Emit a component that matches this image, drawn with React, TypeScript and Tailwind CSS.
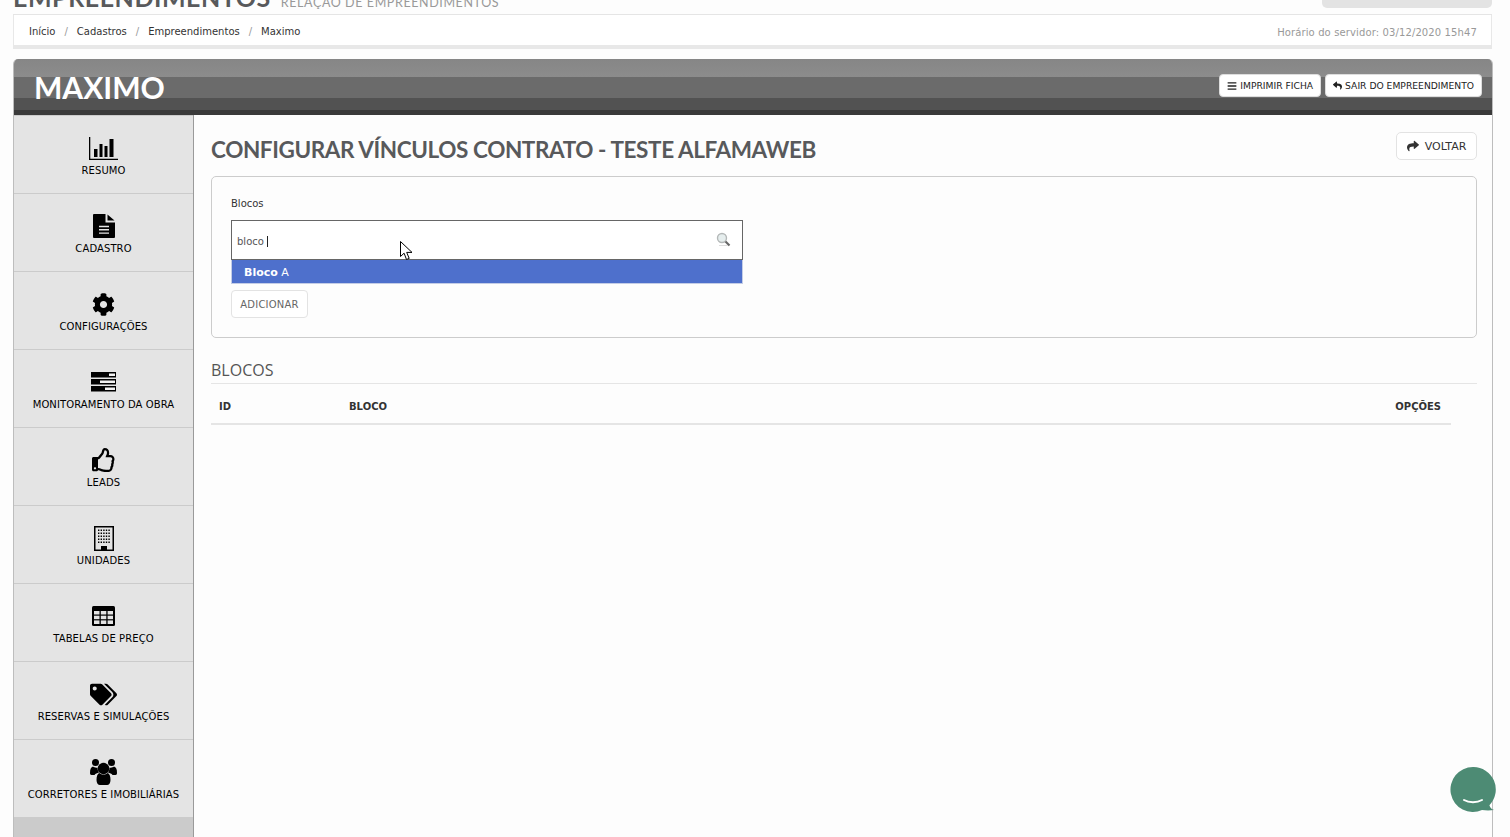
import { FaBars, FaCog, FaRegThumbsUp, FaReply, FaShare, FaTags } from "react-icons/fa";
import type { ReactNode } from "react";

function ChartIcon() {
  return (
    <svg width="29" height="23" viewBox="0 0 29 23" fill="#000">
      <path d="M0 0h1.300v21.700H29V23H0z" />
      <rect x="5" y="12" width="3.500" height="8" />
      <rect x="10.500" y="7" width="3" height="13" />
      <rect x="15.500" y="9" width="3" height="11" />
      <rect x="20.500" y="2" width="4" height="18" />
    </svg>
  );
}

function FileIcon() {
  return (
    <svg width="22" height="24" viewBox="0 0 22 24" fill="#000">
      <path d="M1 0h11.500v8.500H22V23a1 1 0 0 1-1 1H1a1 1 0 0 1-1-1V1a1 1 0 0 1 1-1z" />
      <path d="M14.500.5L21.500 6.500h-7z" />
      <path d="M6 12.500h10M6 15.800h10M6 19.100h10" stroke="#e4e4e4" strokeWidth="1.400" />
    </svg>
  );
}

function ServerIcon() {
  return (
    <svg width="25" height="20" viewBox="0 0 25 20" fill="#000">
      <rect width="25" height="5.500" />
      <rect y="7" width="25" height="5.500" />
      <rect y="14" width="25" height="5.500" />
      <rect x="18" y="1.500" width="6" height="2.500" fill="#f2f2f2" />
      <rect x="9" y="8.500" width="15" height="2.500" fill="#f2f2f2" />
      <rect x="14" y="15.500" width="10" height="2.500" fill="#f2f2f2" />
    </svg>
  );
}

function BuildingIcon() {
  const dots = [];
  for (let r = 0; r < 5; r++) {
    for (let c = 0; c < 5; c++) {
      dots.push(<rect key={`${r}-${c}`} x={4 + c * 2.600} y={3.500 + r * 3} width="1.400" height="1.500" />);
    }
  }
  return (
    <svg width="20" height="25" viewBox="0 0 20 25" fill="#000">
      <path fillRule="evenodd" d="M0 0h20v25H0zM1.500 1.500v22h17v-22z" />
      {dots}
      <rect x="7" y="20" width="6" height="4" />
    </svg>
  );
}

function TableIcon() {
  return (
    <svg width="23" height="20" viewBox="0 0 23 20">
      <rect width="23" height="20" rx="1.500" fill="#000" />
      <g fill="#e4e4e4">
        <rect x="2" y="5" width="5.500" height="3.500" />
        <rect x="8.800" y="5" width="5.500" height="3.500" />
        <rect x="15.600" y="5" width="5.400" height="3.500" />
        <rect x="2" y="9.700" width="5.500" height="3.500" />
        <rect x="8.800" y="9.700" width="5.500" height="3.500" />
        <rect x="15.600" y="9.700" width="5.400" height="3.500" />
        <rect x="2" y="14.400" width="5.500" height="3.600" />
        <rect x="8.800" y="14.400" width="5.500" height="3.600" />
        <rect x="15.600" y="14.400" width="5.400" height="3.600" />
      </g>
    </svg>
  );
}

function UsersIcon() {
  return (
    <svg width="27" height="26" viewBox="0 0 27 26" fill="#000">
      <circle cx="5.500" cy="3.500" r="3.500" />
      <circle cx="21.500" cy="3.500" r="3.500" />
      <path d="M0 14c0-4 1-6 3-6.500 1 1 3 1.500 4.500 1 0 2 .5 3.500 1.500 5-2 .5-3.500 1-4.500 2.500H1.500C.5 16 0 15 0 14z" />
      <path d="M27 14c0-4-1-6-3-6.500-1 1-3 1.500-4.500 1 0 2-.5 3.500-1.500 5 2 .5 3.500 1 4.500 2.500h3c1 0 1.500-1 1.500-2z" />
      <circle cx="13.500" cy="9.500" r="5.800" />
      <path d="M6.500 21c0-4 1-6.500 3-7 2 2 6 2 8 0 2 .5 3 3 3 7 0 3-1.500 5-3.500 5H10c-2 0-3.500-2-3.500-5z" />
    </svg>
  );
}

const menu: { label: string; icon: ReactNode }[] = [
  { label: "RESUMO", icon: <ChartIcon /> },
  { label: "CADASTRO", icon: <FileIcon /> },
  { label: "CONFIGURAÇÕES", icon: <FaCog size={23} /> },
  { label: "MONITORAMENTO DA OBRA", icon: <ServerIcon /> },
  { label: "LEADS", icon: <FaRegThumbsUp size={24} /> },
  { label: "UNIDADES", icon: <BuildingIcon /> },
  { label: "TABELAS DE PREÇO", icon: <TableIcon /> },
  { label: "RESERVAS E SIMULAÇÕES", icon: <FaTags size={27} /> },
  { label: "CORRETORES E IMOBILIÁRIAS", icon: <UsersIcon /> },
];

const crumbs = ["Início", "Cadastros", "Empreendimentos", "Maximo"];

function MenuItem({ label, icon }: { label: string; icon: ReactNode }) {
  return (
    <div className="h-[78px] shrink-0 flex flex-col items-center border-b border-[#cbcbcb] text-black">
      <div className="h-[26px] mt-[19px] flex items-center justify-center">{icon}</div>
      <div className="mt-[4px] text-[10px] leading-[12px] tracking-[0.1px]">{label}</div>
    </div>
  );
}

function HeaderButton({ icon, label }: { icon: ReactNode; label: string }) {
  return (
    <div className="h-[23px] px-[7px] flex items-center gap-[3px] bg-white rounded-[4px] border border-[#ddd] text-[9.2px] text-[#222]">
      {icon}
      <span>{label}</span>
    </div>
  );
}

export default function App() {
  return (
    <div className="relative h-[837px] w-[1510px] overflow-hidden bg-[#fdfdfd] font-['DejaVu_Sans',Verdana,sans-serif]">
      {/* top title, cut off by the scroll position */}
      <div className="h-[15px] mx-[13px] border-b border-[#e5e5e5] w-[1479px] flex justify-between overflow-hidden">
        <div className="flex items-baseline gap-[10px] -mt-[16px] h-[26px] font-['Lato',sans-serif] text-[#58595b]">
          <span className="text-[25px] font-bold leading-[26px] tracking-[0.55px]">EMPREENDIMENTOS</span>
          <span className="text-[12.5px] leading-[26px] tracking-[0.6px] text-[#999]">RELAÇÃO DE EMPREENDIMENTOS</span>
        </div>
        <div className="w-[170px] h-[8px] bg-[#e3e3e3] rounded-b-[5px]" />
      </div>

      {/* breadcrumb */}
      <div className="mx-[13px] w-[1479px] h-[34px] pl-[15px] pr-[14px] flex items-center justify-between border-l border-r border-b-[4px] border-[#e8e8e8] bg-white">
        <div className="flex items-center text-[10px] text-[#333] mt-[2px]">
          {crumbs.map((c, i) => (
            <span key={c} className="flex items-center">
              {i > 0 && <span className="mx-[9px] text-[#999]">/</span>}
              {c}
            </span>
          ))}
        </div>
        <div className="text-[10px] tracking-[0.12px] text-[#999] mt-[4px]">Horário do servidor: 03/12/2020 15h47</div>
      </div>

      {/* main panel */}
      <div className="mt-[10px] ml-[13px] w-[1480px] h-[800px] flex flex-col border-l border-r border-[#bdbdbd] rounded-t-[5px] overflow-hidden">
        <div className="h-[56px] shrink-0 pl-[20px] pr-[10px] flex items-center justify-between bg-[linear-gradient(to_bottom,#868686_0px,#8c8c8c_18px,#6b6b6b_18px,#6b6b6b_39px,#525252_39px,#525252_51px,#3a3a3a_51px)]">
          <div className="font-['Lato',sans-serif] text-[30px] leading-[38px] -mt-[1px] font-bold text-white">MAXIMO</div>
          <div className="flex gap-[4px] -mt-[3px]">
            <HeaderButton icon={<FaBars size={10} />} label="IMPRIMIR FICHA" />
            <HeaderButton icon={<FaReply size={9} />} label="SAIR DO EMPREENDIMENTO" />
          </div>
        </div>

        <div className="flex flex-1 min-h-0">
          {/* sidebar */}
          <div className="w-[180px] shrink-0 flex flex-col bg-[#cbcbcb] border-r border-[#9a9a9a]">
            <div className="bg-[#e4e4e4] flex flex-col border-t border-[#cbcbcb]">
              {menu.map((m, i) => (
                <MenuItem key={i} label={m.label} icon={m.icon} />
              ))}
            </div>
          </div>

          {/* content */}
          <div className="flex-1 pl-[17px] pr-[15px] pt-[17px]">
            <div className="flex items-start justify-between h-[44px]">
              <h1 className="font-['Lato',sans-serif] text-[22.5px] leading-[36px] font-bold tracking-[-0.4px] text-[#58595b]">
                CONFIGURAR VÍNCULOS CONTRATO - TESTE ALFAMAWEB
              </h1>
              <div className="h-[28px] w-[81px] flex items-center justify-center gap-[6px] border border-[#e3e3e3] rounded-[5px] bg-white text-[11px] text-[#333]">
                <FaShare size={12} />
                <span className="mt-[2px]">VOLTAR</span>
              </div>
            </div>

            <div className="h-[162px] border border-[#cccccc] rounded-[5px] pl-[19px] pt-[21px]">
              <div className="text-[10px] leading-[12px] text-[#333]">Blocos</div>
              <div className="relative mt-[10px] w-[512px] h-[40px] border border-[#666] bg-white flex items-center pl-[5px]">
                <span className="text-[10px] text-[#555] mt-[2px]">bloco</span>
                <span className="ml-[3px] mt-[2px] w-px h-[11px] bg-[#222]" />
                <svg className="absolute right-[11px] top-[11px]" width="15" height="15" viewBox="0 0 15 15">
                  <circle cx="6" cy="6" r="4.500" fill="#e6eeee" stroke="#b4b8b8" strokeWidth="1.400" />
                  <path d="M9.500 9.500l4 4" stroke="#666" strokeWidth="2.200" />
                  <path d="M3 13.500h9" stroke="#ddd" strokeWidth="1.200" />
                </svg>
              </div>
              <div className="w-[512px] h-[24px] bg-[#4e70cc] border-x border-b border-[#c4cde6] pl-[12px] pt-[3px] flex items-center text-[11px] text-white">
                <b>Bloco</b>&nbsp;A
              </div>
              <div className="mt-[6px] w-[77px] h-[28px] border border-[#e3e3e3] rounded-[4px] bg-white flex items-center justify-center text-[10px] tracking-[0.2px] text-[#666]">
                ADICIONAR
              </div>
            </div>

            <div className="mt-[22px] h-[24px] border-b border-[#e5e5e5] font-['Open_Sans',sans-serif] text-[16px] leading-[20px] text-[#555]">BLOCOS</div>

            <div className="w-[1240px] h-[41px] pl-[8px] pr-[10px] pt-[5px] flex items-center border-b-2 border-[#e5e5e5] text-[10px] font-bold text-[#333]">
              <span className="w-[130px]">ID</span>
              <span className="flex-1">BLOCO</span>
              <span>OPÇÕES</span>
            </div>
          </div>
        </div>
      </div>

      {/* mouse cursor */}
      <svg className="absolute left-[400px] top-[241px]" width="13" height="20" viewBox="0 0 13 20">
        <path d="M.5.500v15l3.600-3.300 2.400 6.300 2.700-1.100-2.500-6H12z" fill="#fff" stroke="#000" />
      </svg>

      {/* chat bubble */}
      <svg className="absolute left-[1450px] top-[767px]" width="46" height="46" viewBox="0 0 46 46">
        <path d="M23 0a22.500 22.500 0 1 0 9 43.100c3.500.4 8 .6 12-.1-2.500-1-4-2.500-4.600-4.800A22.500 22.500 0 0 0 23 0z" fill="#4d8b74" />
        <path d="M14 33c5 3 13 3 18 0" fill="none" stroke="#fff" strokeWidth="2" strokeLinecap="round" />
      </svg>
    </div>
  );
}
